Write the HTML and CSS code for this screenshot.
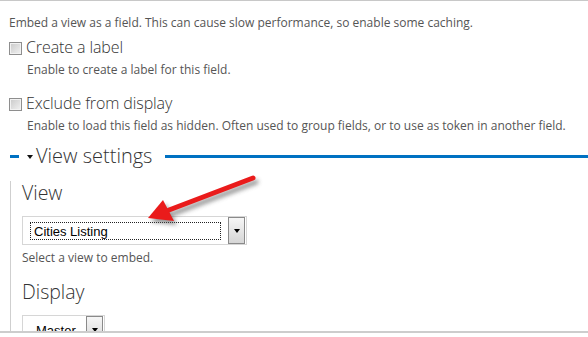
FILE: index.html
```html
<!DOCTYPE html>
<html lang="en">
<head>
    <meta charset="UTF-8">
    <title>Embed view field</title>
    <link rel="stylesheet" href="styles.css">
</head>
<body>
    <div class="page">
        <div class="intro">Embed a view as a field. This can cause slow performance, so enable some caching.</div>

        <div class="check-group first">
            <label class="check-label"><span class="checkbox"></span>Create a label</label>
            <div class="help indent">Enable to create a label for this field.</div>
        </div>

        <div class="check-group">
            <label class="check-label"><span class="checkbox"></span>Exclude from display</label>
            <div class="help indent">Enable to load this field as hidden. Often used to group fields, or to use as token in another field.</div>
        </div>

        <div class="fieldset">
            <div class="legend-row">
                <span class="rule-short"></span>
                <span class="legend"><span class="caret"></span>View settings</span>
                <span class="rule"></span>
            </div>
            <div class="fieldset-body">
                <div class="field-title">View</div>
                <div class="select wide">
                    <span class="select-value">Cities Listing</span>
                    <span class="select-button"><span class="down"></span></span>
                </div>
                <div class="help">Select a view to embed.</div>

                <div class="field-title">Display</div>
                <div class="select narrow">
                    <span class="select-value plain">Master</span>
                    <span class="select-button"><span class="down"></span></span>
                </div>
            </div>
        </div>

        <svg class="pointer" width="130" height="64" viewBox="0 0 130 64">
            <defs>
                <filter id="soft" x="-20%" y="-40%" width="140%" height="180%">
                    <feGaussianBlur stdDeviation="2"/>
                </filter>
            </defs>
            <g fill="#555" stroke="#555" opacity="0.6" filter="url(#soft)" transform="translate(3 4)">
                <line x1="113" y1="8" x2="29" y2="40" stroke-width="5" stroke-linecap="round"/>
                <polygon points="8,48 23,30 34,51" stroke="none"/>
            </g>
            <g fill="#ea1b1b" stroke="#ea1b1b">
                <line x1="113" y1="8" x2="29" y2="40" stroke-width="5" stroke-linecap="round"/>
                <polygon points="8,48 23,30 34,51" stroke="none"/>
            </g>
        </svg>

        <div class="bottom-edge"></div>
    </div>
</body>
</html>
```

FILE: styles.css
```css
body {
    margin: 0;
    height: 337px;
    overflow: hidden;
    background-color: #fff;
    font-family: "Open Sans", Arial, sans-serif;
    color: #555;
}

.page {
    position: relative;
    height: 337px;
    overflow: hidden;
    border-top: 1px solid #c8c8c8;
    padding-left: 9px;
    box-sizing: border-box;
}

.intro {
    font-size: 12px;
    line-height: 16px;
    padding-top: 14px;
}

.check-group {
    margin-top: 15px;
}

.check-group.first {
    margin-top: 6px;
}

.check-label {
    display: flex;
    align-items: center;
    font-size: 16px;
    font-weight: 300;
    line-height: 20px;
    color: #333;
    letter-spacing: -0.1px;
}

.checkbox {
    width: 11px;
    height: 11px;
    margin-right: 4px;
    margin-top: 2px;
    border: 1px solid #8e8e8e;
    box-shadow: inset 0 0 0 1px #f2f2f2;
    background: linear-gradient(135deg, #c9c9c9, #f2f2f2);
}

.help {
    font-size: 12px;
    line-height: 16px;
    margin-top: 5px;
}

.help.indent {
    padding-left: 18px;
}

.fieldset {
    margin-top: 9px;
    margin-left: 1px;
}

.legend-row {
    display: flex;
    align-items: center;
    height: 24px;
}

.rule-short {
    width: 9px;
    height: 3px;
    margin-top: 2px;
    background-color: #0071c2;
}

.rule {
    flex: 1;
    height: 3px;
    margin-top: 2px;
    background-color: #0071c2;
}

.legend {
    display: flex;
    align-items: center;
    padding: 0 13px 0 8px;
    font-size: 20px;
    font-weight: 300;
    color: #333;
}

.caret {
    width: 0;
    height: 0;
    margin: 4px 3px 0 0;
    border-left: 3.5px solid transparent;
    border-right: 3.5px solid transparent;
    border-top: 4px solid #111;
}

.fieldset-body {
    border-left: 1px solid #cfcfcf;
    padding-left: 11px;
}

.field-title {
    font-size: 19.5px;
    font-weight: 300;
    line-height: 24px;
    color: #333;
    margin-top: 14px;
    margin-bottom: 11px;
}

.select {
    display: flex;
    align-items: stretch;
    height: 27px;
    padding: 0 0 0 7px;
    border: 1px solid #d6d6d6;
    background-color: #fff;
    font-family: "Liberation Sans", Arial, sans-serif;
    font-size: 13px;
    color: #000;
}

.select.wide {
    width: 216px;
}

.select.narrow {
    width: 74px;
}

.select-value {
    flex: 1;
    display: flex;
    align-items: center;
    margin: 5px 7px 4px 0;
    padding-left: 3px;
    border: 1px dotted #222;
}

.select-value.plain {
    border-color: transparent;
    padding-left: 5px;
}

.select-button {
    display: flex;
    align-items: center;
    justify-content: center;
    width: 15px;
    margin: 0 1px 0 0;
    border: 1px solid #8a8a8a;
    background: linear-gradient(#f6f6f6, #d6d6d6);
}

.down {
    width: 0;
    height: 0;
    border-left: 3.5px solid transparent;
    border-right: 3.5px solid transparent;
    border-top: 4px solid #000;
}

.pointer {
    position: absolute;
    left: 140px;
    top: 169px;
}

.bottom-edge {
    position: absolute;
    left: 0;
    right: 0;
    top: 330px;
    height: 7px;
    border-top: 2px solid #cdcdcd;
    background-color: #fff;
}
```
